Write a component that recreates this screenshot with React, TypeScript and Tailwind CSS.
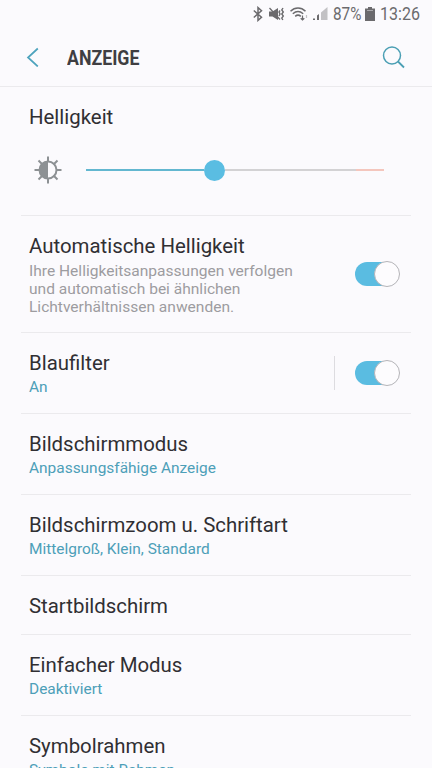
import { ReactNode } from 'react'

function StatusBar() {
  return (
    <div className="flex h-7 shrink-0 items-center pl-[253px] text-[#6b6a6d]">
      <svg className="shrink-0" width="10" height="16" viewBox="0 0 10 16" fill="none" stroke="currentColor" strokeWidth="1.500">
        <path d="M0.800 4.500 8.500 11.200 5 14.400V1.600L8.500 4.800 0.800 11.500" />
      </svg>
      <svg className="ml-1.5 shrink-0" width="16" height="16" viewBox="0 0 16 16" fill="none" stroke="currentColor">
        <path d="M0 5.500h3.500L9 2v12l-5.500-3.500H0z" fill="currentColor" stroke="none" />
        <path d="M0.500 2l10.500 11.500" strokeWidth="1.300" />
        <path d="M14 2l-1.200 2 1.500 2-1.500 2 1.500 2-1.500 2 1 2M11 4.500l-1 1.500 1 2-1 2" strokeWidth="1.400" />
      </svg>
      <svg className="ml-[5px] shrink-0" width="20" height="16" viewBox="0 0 20 16" fill="none" stroke="currentColor" strokeWidth="1.500">
        <path d="M0.500 5.300C5 1 11 1 15.500 5.300M2.800 7.800C6 5 10 5 13.200 7.800M5.200 10.300C7 8.800 9 8.800 10.800 10.300" />
        <path d="M12.500 9.500v4.500M10.700 12.300l1.800 1.700 1.800-1.700" strokeWidth="1.200" />
        <path d="M16.500 9v3" stroke="#c2c1c4" strokeWidth="1.200" />
      </svg>
      <svg className="ml-[3px] shrink-0" width="15" height="16" viewBox="0 0 15 16" fill="currentColor">
        <path d="M0 12.500h2V14H0zM4 9.500l2-1.500v6H4z" />
        <path d="M8 6.500 14.500 1v13H8z" fill="#c2c1c4" />
      </svg>
      <div className="ml-[5px] w-[29px] shrink-0 pt-px">
        <span className="inline-block origin-left scale-x-[0.85] text-[18px] leading-5">87%</span>
      </div>
      <svg className="ml-[3px] shrink-0" width="10" height="16" viewBox="0 0 10 16" fill="currentColor">
        <path d="M3 1h4v1.500h3V15H0V2.500h3z" />
        <path d="M2 4h6v1H2z" fill="#a9a8ab" />
      </svg>
      <div className="ml-[5px] w-10 shrink-0 pt-px">
        <span className="inline-block origin-left scale-x-[0.89] text-[18px] leading-5">13:26</span>
      </div>
    </div>
  )
}

function Header() {
  return (
    <header className="flex h-[59px] shrink-0 items-center border-b border-[#ebeaed] pl-[26px] pr-[26px]">
      <svg width="14" height="20" viewBox="0 0 14 20" fill="none" stroke="#4da3bd" strokeWidth="1.700">
        <path d="M11.800 1.500 2 10.500l9.800 9" />
      </svg>
      <h1 className="ml-[27px] flex-1 pt-[3px]">
        <span className="inline-block origin-left scale-x-[0.865] text-[20.500px] font-bold leading-6 text-[#3f3e42]">ANZEIGE</span>
      </h1>
      <svg width="24" height="24" viewBox="0 0 24 24" fill="none" stroke="#4b9fb4" strokeWidth="1.500">
        <circle cx="10" cy="10.500" r="8.500" />
        <path d="M16 16.500l6 6" strokeWidth="1.800" />
      </svg>
    </header>
  )
}

function BrightnessIcon() {
  return (
    <svg width="28" height="28" viewBox="0 0 28 28" fill="none" stroke="#8d9194" strokeWidth="2">
      <circle cx="14" cy="14" r="8.500" />
      <path d="M14 5.500a8.500 8.500 0 0 0 0 17z" fill="#8d9194" stroke="none" />
      <path d="M14 0.500V6M14 22v5.500M0.500 14H6M22 14h5.500M4.500 4.500l4 4M19.500 19.500l4 4M4.500 23.500l4-4M19.500 8.500l4-4" />
    </svg>
  )
}

function BrightnessSlider() {
  return (
    <div className="flex items-center">
      <div className="h-[2px] w-[118px] bg-[#62b7d0]" />
      <div className="size-[21px] rounded-full bg-[#5abde2]" />
      <div className="h-[2px] w-[131px] bg-[#d3d2d4]" />
      <div className="h-[2px] w-[28px] bg-[#f4c6bd]" />
    </div>
  )
}

function Toggle() {
  return (
    <div className="flex h-[27px] w-[46px] items-center">
      <div className="flex h-6 w-[44px] items-center rounded-full bg-[#5abce1]">
        <div className="ml-[19px] size-[26px] shrink-0 rounded-full border border-[#b5b4b8] bg-[#fdfcfe]" />
      </div>
    </div>
  )
}

type RowProps = {
  title: string
  value?: string
  description?: string
  children?: ReactNode
}

function Row({ title, value, description, children }: RowProps) {
  return (
    <div className="mx-[21px] flex shrink-0 items-center border-b border-[#ebeaed] pl-2 pr-[10px]">
      <div className="flex-1 pb-4 pt-[18px]">
        <h2 className="text-[20.400px] leading-6 text-[#302f33]">{title}</h2>
        {value && <p className="mb-px mt-[3px] text-[15.450px] leading-[18px] text-[#4d9fb8]">{value}</p>}
        {description && (
          <p className="mt-1 w-[275px] text-[15.550px] leading-[18px] text-[#9d9ca0]">{description}</p>
        )}
      </div>
      {children}
    </div>
  )
}

export default function App() {
  return (
    <div className="flex h-[768px] w-[432px] flex-col overflow-hidden bg-[#fbfafd] font-['Roboto',sans-serif]">
      <StatusBar />
      <Header />

      <section className="mx-[21px] h-[129px] shrink-0 border-b border-[#ebeaed] pl-2 pt-[18px]">
        <h2 className="text-[20.400px] leading-6 text-[#302f33]">Helligkeit</h2>
        <div className="mt-[27px] flex items-center gap-[24px] pl-[5px]">
          <BrightnessIcon />
          <BrightnessSlider />
        </div>
      </section>

      <Row
        title="Automatische Helligkeit"
        description="Ihre Helligkeitsanpassungen verfolgen und automatisch bei ähnlichen Lichtverhältnissen anwenden."
      >
        <Toggle />
      </Row>
      <Row title="Blaufilter" value="An">
        <div className="mr-5 h-[34px] w-px bg-[#dddce0]" />
        <Toggle />
      </Row>
      <Row title="Bildschirmmodus" value="Anpassungsfähige Anzeige" />
      <Row title="Bildschirmzoom u. Schriftart" value="Mittelgroß, Klein, Standard" />
      <Row title="Startbildschirm" />
      <Row title="Einfacher Modus" value="Deaktiviert" />
      <Row title="Symbolrahmen" value="Symbole mit Rahmen" />
    </div>
  )
}
